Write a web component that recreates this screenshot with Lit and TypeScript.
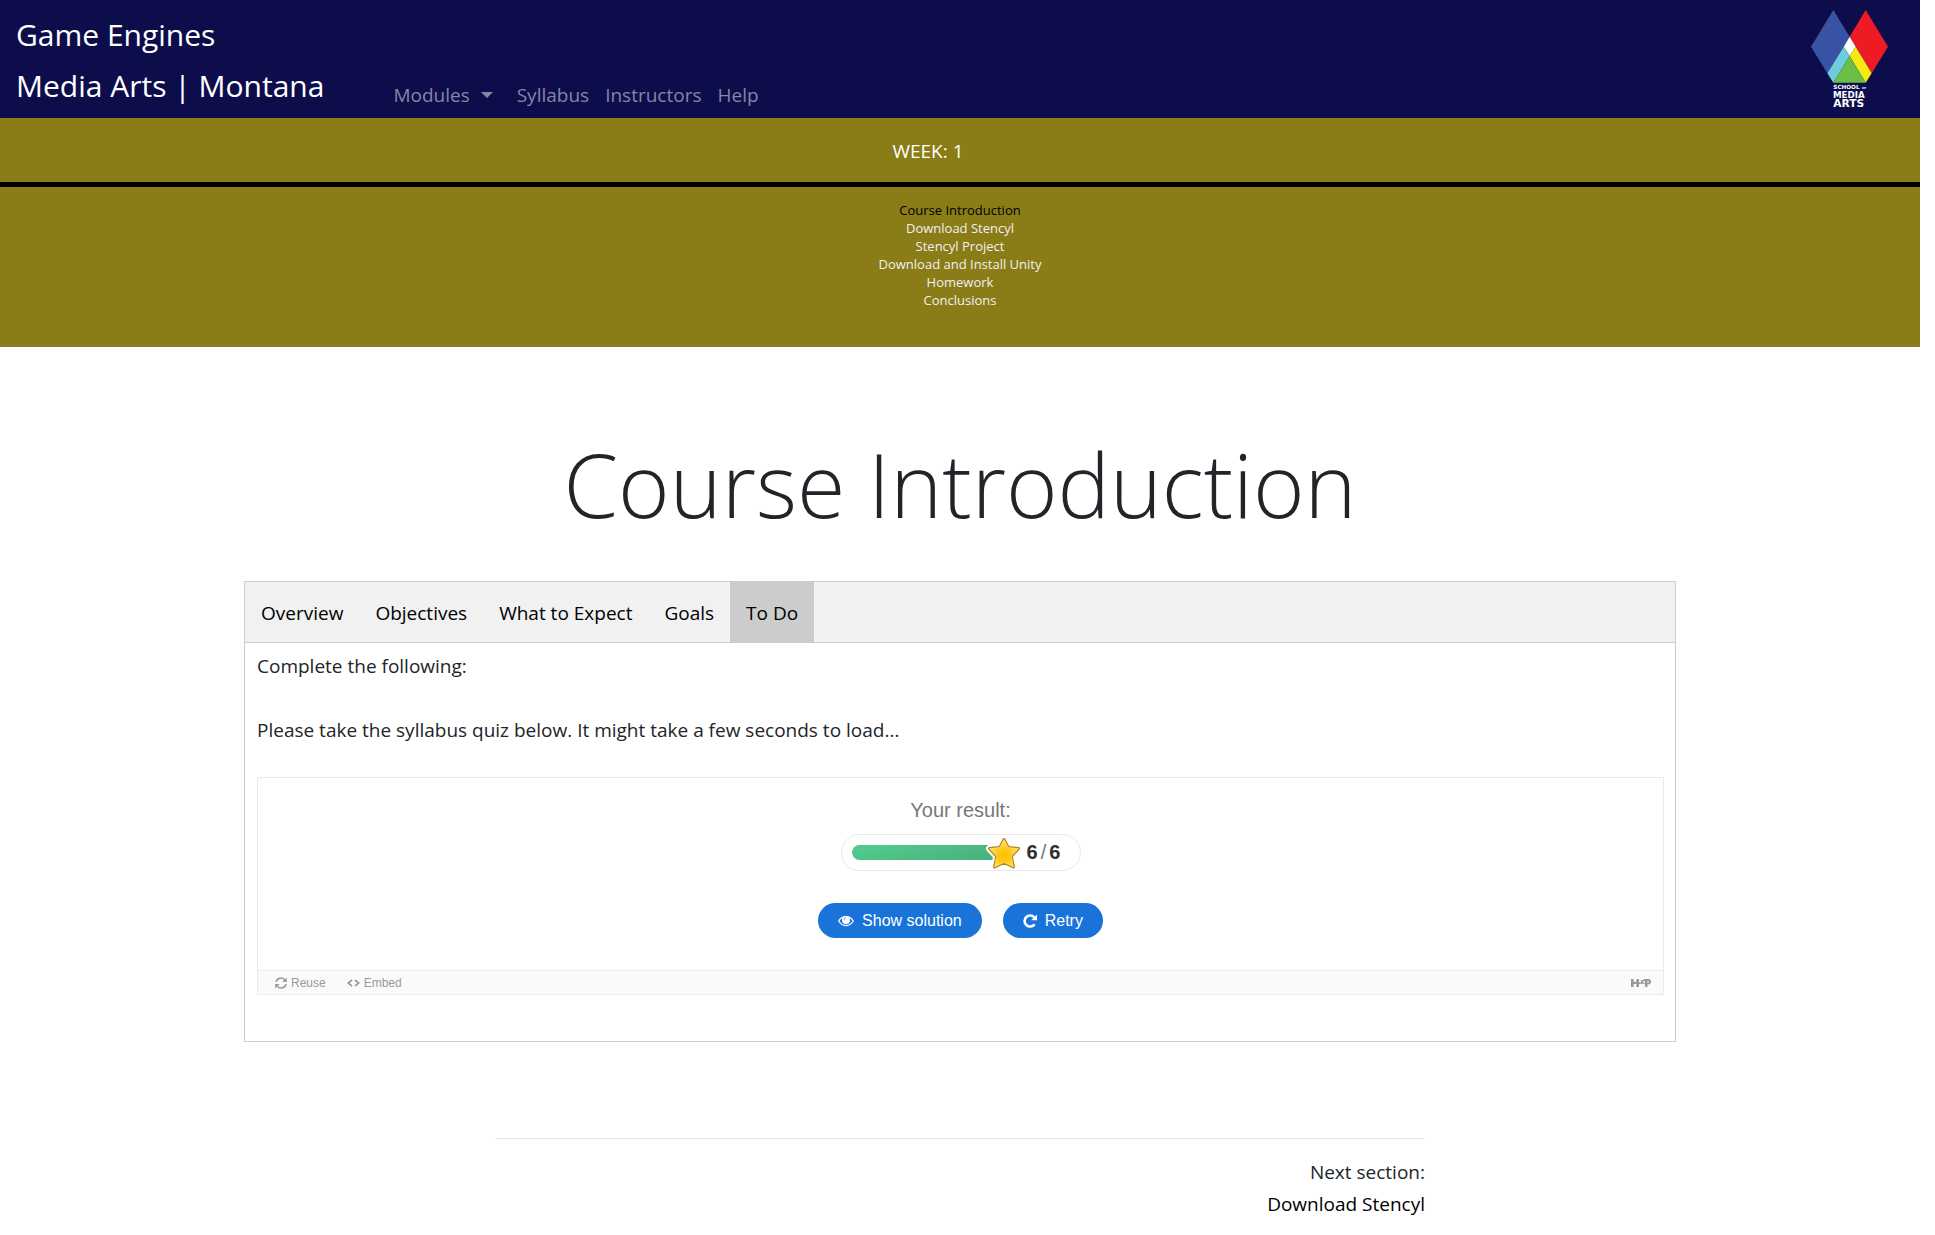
import { LitElement, html, css, svg } from "lit";
import { customElement, property, state } from "lit/decorators.js";
import { classMap } from "lit/directives/class-map.js";

const eyeIcon = svg`<svg viewBox="0 0 16 12" width="16" height="12" aria-hidden="true">
  <path fill="currentColor" fill-rule="evenodd" d="M8 0.8C4.6 0.8 1.7 3 0 6c1.7 3 4.600 5.200 8 5.200S14.300 9 16 6C14.300 3 11.400 0.800 8 0.800Zm0 9.200C5.300 10 2.900 8.500 1.400 6 2.200 4.700 3.200 3.700 4.400 3 4.100 3.600 3.900 4.300 3.900 5a4.100 4.100 0 0 0 8.200 0c0-.7-.2-1.400-.5-2 1.200.7 2.200 1.700 3 3-1.500 2.500-3.900 4-6.600 4Z"/>
  <path fill="none" stroke="#1a73d9" stroke-width="0.7" d="M5.900 4.900A2.200 2.200 0 0 1 8 2.700"/>
</svg>`;

const retryIcon = svg`<svg viewBox="0 0 14 14" width="14" height="14" aria-hidden="true">
  <path fill="none" stroke="currentColor" stroke-width="2.600" d="M11.600 10.200A5.500 5.500 0 1 1 11.200 3.400"/>
  <path fill="currentColor" d="M14 0.400V6.200H8.200Z"/>
</svg>`;

const reuseIcon = svg`<svg viewBox="0 0 12 12" width="12" height="12" aria-hidden="true">
  <g fill="none" stroke="currentColor" stroke-width="1.500">
    <path d="M1 5A5 5 0 0 1 9.800 2.900"/>
    <path d="M11 7A5 5 0 0 1 2.200 9.100"/>
  </g>
  <path fill="currentColor" d="M11.800 0.600V5H7.400ZM0.200 11.400V7H4.600Z"/>
</svg>`;

const embedIcon = svg`<svg viewBox="0 0 13 8" width="13" height="8" aria-hidden="true">
  <path fill="none" stroke="currentColor" stroke-width="1.700" d="M5 0.900 1.300 4 5 7.100M8 0.900 11.700 4 8 7.100"/>
</svg>`;

const h5pMark = svg`<svg viewBox="0 0 20 8" width="20" height="8" aria-hidden="true">
  <path fill="currentColor" d="M0 0H2.600V2.800H5.400V0H8V3.400H10L9.200 5H8V8H5.400V5.100H2.600V8H0Z"/>
  <path fill="currentColor" d="M10.400 1H13V2.300H11.700L11.500 3.200C13 2.900 14 3.800 13.700 4.900H12.400C12.300 4.300 11.500 4.300 11.200 4.900H9.500Z"/>
  <path fill="currentColor" fill-rule="evenodd" d="M12.800 0H17.200C19.100 0 20 1.200 20 2.800S19 5.600 17.200 5.600H16.400V8H14V2.200H12.800ZM16.400 2V3.700H17C18.100 3.700 18.100 2 17 2Z"/>
</svg>`;

const starIcon = svg`<svg viewBox="0 0 38 36" width="38" height="36" aria-hidden="true">
  <defs>
    <radialGradient id="star-fill" cx="0.5" cy="0.580" r="0.520">
      <stop offset="0" stop-color="#ffc200"/>
      <stop offset="0.450" stop-color="#ffc917"/>
      <stop offset="1" stop-color="#ffe45c"/>
    </radialGradient>
  </defs>
  <path fill="#fff" stroke="#fff" stroke-width="7" stroke-linejoin="round"
    d="M19 4.500 23.200 12.600 33.500 13.600 26.300 21.300 28.400 32 19 27.400 9.600 32 11.700 21.300 4.500 13.600 14.800 12.600Z"/>
  <path fill="url(#star-fill)" stroke="#b17a1c" stroke-width="3" stroke-linejoin="round"
    d="M19 4.500 23.200 12.600 33.500 13.600 26.300 21.300 28.400 32 19 27.400 9.600 32 11.700 21.300 4.500 13.600 14.800 12.600Z"/>
  <path fill="url(#star-fill)" stroke="#ffe260" stroke-width="0.800" stroke-linejoin="round"
    d="M19 4.500 23.200 12.600 33.500 13.600 26.300 21.300 28.400 32 19 27.400 9.600 32 11.700 21.300 4.500 13.600 14.800 12.600Z"/>
</svg>`;

const buttonReset = css`
  button {
    font: inherit;
    color: inherit;
    background: none;
    border: 0;
    margin: 0;
    padding: 0;
    cursor: pointer;
  }
  a {
    color: inherit;
    text-decoration: none;
  }
`;

@customElement("site-header")
class SiteHeader extends LitElement {
  static styles = [
    buttonReset,
    css`
      :host {
        display: block;
        background: #0e0d4c;
        color: #fff;
      }
      .bar {
        display: flex;
        align-items: flex-end;
        padding: 9px 31px 7px 16px;
      }
      .brand {
        display: flex;
        flex-direction: column;
        font-size: 30px;
        line-height: 51px;
      }
      .links {
        display: flex;
        gap: 16px;
        flex: 1;
        margin-left: 69px;
        color: #8685a5;
        line-height: 32px;
      }
      .dropdown {
        display: flex;
        align-items: center;
        gap: 11px;
        margin-right: 8px;
      }
      .caret {
        border: 6px solid transparent;
        border-top-color: currentColor;
        border-bottom: 0;
      }
      .logo {
        height: 102px;
      }
      .logo svg {
        display: block;
        overflow: visible;
      }
      .logo-text {
        fill: #fff;
        font-family: "DejaVu Sans", sans-serif;
        font-weight: 700;
      }
    `,
  ];

  render() {
    return html`
      <header class="bar">
        <a class="brand" href="#home"><span>Game Engines</span><span>Media Arts | Montana</span></a>
        <nav class="links">
          <button class="dropdown" type="button" aria-haspopup="true">Modules<span class="caret"></span></button>
          <a href="#syllabus">Syllabus</a>
          <a href="#instructors">Instructors</a>
          <a href="#help">Help</a>
        </nav>
        <a class="logo" href="#school" aria-label="School of Media Arts">
          <svg viewBox="90 27 237 306" width="79" height="102">
            <path fill="#3853a4" d="M160 30 209 110 142 220 93 140Z" />
            <path fill="#ed1c24" d="M257 30 324 140 275 220 209 110Z" />
            <path fill="#fff" d="M209 110 227 140 209 168 191 140Z" />
            <path fill="#6dcddd" d="M191 140 209 168 160 248 142 220Z" />
            <path fill="#f5eb14" d="M227 140 275 220 257 248 209 168Z" />
            <path fill="#6cbd45" d="M209 168 257 248H160Z" />
            <g class="logo-text">
              <text x="160" y="268" font-size="17">SCHOOL</text>
              <text x="246" y="268" font-size="8">OF</text>
              <text x="159" y="294" font-size="26">MEDIA</text>
              <text x="160" y="321" font-size="32">ARTS</text>
            </g>
          </svg>
        </a>
      </header>
    `;
  }
}

@customElement("week-outline")
class WeekOutline extends LitElement {
  @property({ type: Number }) week = 1;
  @property({ attribute: false }) sections: string[] = [];
  @property() current = "";

  static styles = [
    buttonReset,
    css`
      :host {
        display: block;
        background: #8a7c17;
        color: #fff;
        text-align: center;
      }
      .week {
        padding: 17px 64px 15px 0;
        line-height: 32px;
        border-bottom: 5px solid #000;
      }
      .sections {
        list-style: none;
        margin: 0;
        padding: 14px 0 38px;
        font-size: 13px;
        line-height: 18px;
        color: #f1f1f1;
      }
      .current {
        color: #000;
      }
    `,
  ];

  render() {
    return html`
      <div class="week">WEEK: ${this.week}</div>
      <ul class="sections">
        ${this.sections.map(
          (name) => html`<li><a href="#section" class=${classMap({ current: name === this.current })}>${name}</a></li>`
        )}
      </ul>
    `;
  }
}

@customElement("quiz-result")
class QuizResult extends LitElement {
  @property({ type: Number }) score = 6;
  @property({ type: Number }) max = 6;

  static styles = [
    buttonReset,
    css`
      :host {
        display: block;
        border: 1px solid #ebebeb;
        font-family: "Liberation Sans", Arial, sans-serif;
        font-size: 16px;
      }
      .result {
        display: flex;
        flex-direction: column;
        align-items: center;
        padding: 20px 0 32px;
      }
      .label {
        font-size: 20px;
        line-height: 24px;
        color: #777;
      }
      .score {
        display: flex;
        align-items: center;
        box-sizing: border-box;
        width: 240px;
        height: 37px;
        margin: 12px 0 32px;
        padding-left: 10px;
        border: 1px solid #e8e8e8;
        border-radius: 19px;
      }
      .meter {
        width: 152px;
        height: 15px;
        border-radius: 8px;
        background: linear-gradient(165deg, #54cc8e, #48af7b);
      }
      .star {
        flex: none;
        height: 36px;
        margin: 0 4px 0 -19px;
      }
      .star svg {
        display: block;
      }
      .points {
        display: flex;
        gap: 3px;
        font-size: 20px;
        line-height: 24px;
        padding-bottom: 2px;
        color: #777;
      }
      .points b {
        color: #2f2f2f;
      }
      .actions {
        display: flex;
        gap: 21px;
      }
      .action {
        display: flex;
        align-items: center;
        gap: 8px;
        height: 35px;
        padding: 0 20px;
        border-radius: 18px;
        background: #1a73d9;
        color: #fff;
      }
      .footer {
        display: flex;
        align-items: center;
        gap: 21px;
        height: 23px;
        padding: 0 12px 0 17px;
        border-top: 1px solid #ebebeb;
        background: #fafafa;
        color: #999;
        font-size: 12px;
      }
      .tool {
        display: flex;
        align-items: center;
        gap: 4px;
      }
      .mark {
        display: flex;
        margin-left: auto;
      }
    `,
  ];

  render() {
    return html`
      <div class="result">
        <div class="label">Your result:</div>
        <div class="score">
          <div class="meter"></div>
          <div class="star">${starIcon}</div>
          <div class="points"><b>${this.score}</b><span>/</span><b>${this.max}</b></div>
        </div>
        <div class="actions">
          <button class="action" type="button">${eyeIcon}Show solution</button>
          <button class="action" type="button">${retryIcon}Retry</button>
        </div>
      </div>
      <div class="footer">
        <button class="tool" type="button">${reuseIcon}Reuse</button>
        <button class="tool" type="button">${embedIcon}Embed</button>
        <a class="mark" href="#h5p" aria-label="H5P">${h5pMark}</a>
      </div>
    `;
  }
}

@customElement("app-root")
class AppRoot extends LitElement {
  @state() private tab = "To Do";

  private tabs = ["Overview", "Objectives", "What to Expect", "Goals", "To Do"];
  private sections = [
    "Course Introduction",
    "Download Stencyl",
    "Stencyl Project",
    "Download and Install Unity",
    "Homework",
    "Conclusions",
  ];

  static styles = [
    buttonReset,
    css`
      :host {
        display: block;
        padding-right: 15px;
        background: #fff;
        color: #212529;
        font-family: "Open Sans", "Noto Sans", sans-serif;
        font-size: 19px;
        line-height: 32px;
      }
      .title {
        margin: 79px 0 39px;
        font-size: 88px;
        font-weight: 300;
        line-height: 116px;
        text-align: center;
      }
      .lesson {
        box-sizing: border-box;
        width: 75%;
        margin: 0 auto;
        padding: 0 4px;
      }
      .tabs {
        display: flex;
        border: 1px solid #ccc;
        background: #f1f1f1;
        color: #000;
      }
      .tab {
        padding: 15px 16px 13px;
      }
      .tab.active {
        background: #ccc;
      }
      .panel {
        display: flex;
        flex-direction: column;
        gap: 32px;
        padding: 7px 11px 46px 12px;
        border: 1px solid #ccc;
        border-top: 0;
      }
      .text {
        margin: 0;
      }
      .text + quiz-result {
        margin-top: -1px;
      }
      .next {
        box-sizing: border-box;
        width: 50%;
        margin: 96px auto 0;
        padding: 0 15px 15px;
        text-align: right;
      }
      .rule {
        margin: 0 0 17px;
        border: 0;
        border-top: 1px solid #e5e5e5;
      }
      .next-link {
        display: block;
        color: #000;
      }
    `,
  ];

  render() {
    return html`
      <site-header></site-header>
      <week-outline .week=${1} .sections=${this.sections} current="Course Introduction"></week-outline>
      <main>
        <h1 class="title">Course Introduction</h1>
        <section class="lesson">
          <div class="tabs" role="tablist">
            ${this.tabs.map(
              (name) => html`<button
                type="button"
                role="tab"
                aria-selected=${name === this.tab ? "true" : "false"}
                class=${classMap({ tab: true, active: name === this.tab })}
                @click=${() => (this.tab = name)}
              >${name}</button>`
            )}
          </div>
          <div class="panel" role="tabpanel">
            <p class="text">Complete the following:</p>
            <p class="text">Please take the syllabus quiz below. It might take a few seconds to load...</p>
            <quiz-result></quiz-result>
          </div>
        </section>
        <footer class="next">
          <hr class="rule" />
          <div>Next section:</div>
          <a class="next-link" href="#next">Download Stencyl</a>
        </footer>
      </main>
    `;
  }
}
